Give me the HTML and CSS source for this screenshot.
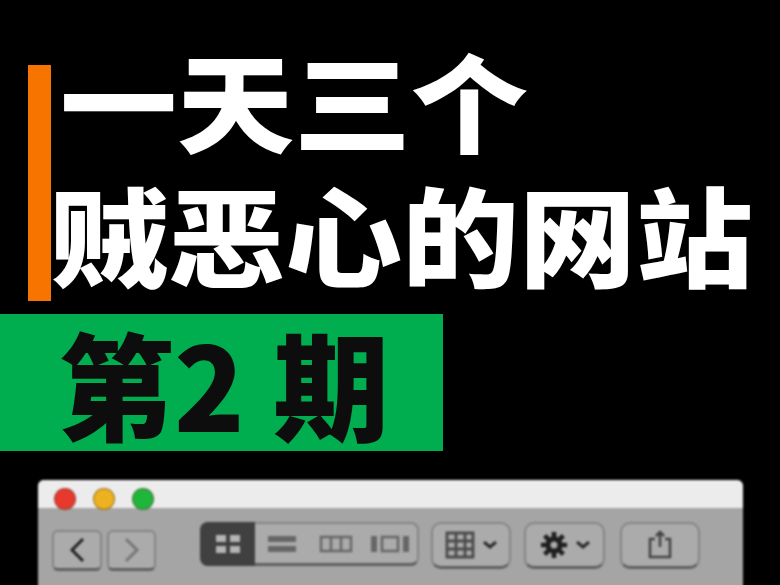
FILE: index.html
```html
<!DOCTYPE html>
<html lang="zh-CN">
<head>
<meta charset="utf-8">
<title>一天三个贼恶心的网站</title>
<link rel="stylesheet" href="styles.css">
</head>
<body>
<header class="head">
  <div class="accent"></div>
  <h1 class="title">
    <span class="line one">一天三个</span>
    <span class="line two">贼恶心的网站</span>
  </h1>
</header>
<div class="banner"><span class="banner-text">第2 期</span></div>
<section class="window">
  <div class="titlebar">
    <i class="dot red"></i><i class="dot yellow"></i><i class="dot green"></i>
  </div>
  <div class="toolbar">
    <div class="nav">
      <div class="btn nav-btn"><svg width="20" height="26" viewBox="0 0 20 26"><path d="M16 2 5 13l11 11" fill="none" stroke="#222" stroke-width="3"/></svg></div>
      <div class="btn nav-btn next"><svg width="20" height="26" viewBox="0 0 20 26"><path d="M4 2l11 11L4 24" fill="none" stroke="#777" stroke-width="3"/></svg></div>
    </div>
    <div class="segments">
      <div class="seg active"><svg width="26" height="20" viewBox="0 0 26 20"><path fill="#b5b5b5" d="M1 1h10v7H1zM15 1h10v7H15zM1 12h10v7H1zM15 12h10v7H15z"/></svg></div>
      <div class="seg"><svg width="30" height="20" viewBox="0 0 30 20"><path fill="#666" d="M1 2h28v6H1zM1 12h28v6H1z"/></svg></div>
      <div class="seg"><svg width="34" height="20" viewBox="0 0 34 20"><path fill="none" stroke="#666" stroke-width="2.4" d="M2 3h30v14H2zM12 3v14M22 3v14"/></svg></div>
      <div class="seg"><svg width="40" height="20" viewBox="0 0 40 20"><path fill="#666" d="M1 2h6v16H1zM33 2h6v16h-6z"/><path fill="none" stroke="#666" stroke-width="2.6" d="M12 3h16v14H12z"/></svg></div>
    </div>
    <div class="btn tool arrange">
      <svg width="30" height="28" viewBox="0 0 30 28"><path fill="none" stroke="#4a4a4a" stroke-width="2.8" d="M2 2h26v24H2zM2 10h26M2 18h26M11 2v24M20 2v24"/></svg>
      <svg class="chev" width="14" height="8" viewBox="0 0 14 8"><path d="M1 1l6 5 6-5" fill="none" stroke="#2b2b2b" stroke-width="3"/></svg>
    </div>
    <div class="btn tool gear">
      <svg width="28" height="28" viewBox="0 0 30 30"><circle cx="15" cy="15" r="6.5" fill="none" stroke="#1f1f1f" stroke-width="5.5"/><path stroke="#1f1f1f" stroke-width="5" d="M15 1v6M15 23v6M1 15h6M23 15h6M5 5l4 4M21 21l4 4M25 5l-4 4M9 21l-4 4"/></svg>
      <svg class="chev" width="14" height="8" viewBox="0 0 14 8"><path d="M1 1l6 5 6-5" fill="none" stroke="#2b2b2b" stroke-width="3"/></svg>
    </div>
    <div class="btn tool share">
      <svg width="26" height="30" viewBox="0 0 26 30"><path fill="none" stroke="#444" stroke-width="2.6" d="M8 9H3v18h20V9h-5M13 17V3M9 6l4-4 4 4"/></svg>
    </div>
  </div>
</section>
</body>
</html>
```
FILE: styles.css
```css
* { box-sizing: border-box; }
html, body { margin: 0; height: 585px; overflow: hidden; background: #000; }
body { font-family: "Noto Sans CJK SC", "Liberation Sans", sans-serif; }

.head { display: flex; height: 314px; padding: 65px 0 13px 28px; }
.accent { width: 23px; background: #f77400; flex: none; }
.title { margin: -32px 0 0; font-size: 117px; line-height: 128px; font-weight: 900; color: #fff; }
.line { display: block; white-space: nowrap; transform: scaleY(.92); transform-origin: 0 60%; }
.one { margin-left: 9px; margin-bottom: 6px; }
.two { margin-left: 0; }

.banner { display: flex; align-items: center; width: 443px; height: 137px; background: #00ae50; padding: 0 0 3px 58px; }
.banner-text { font-size: 116px; line-height: 134px; font-weight: 900; color: #0d0d0d; white-space: pre; word-spacing: 2px; }

.window { margin: 29px 0 0 38px; width: 705px; height: 120px; border-radius: 6px 6px 0 0; overflow: hidden; background: #a5a5a5; filter: blur(1px); }
.titlebar { display: flex; align-items: center; gap: 17px; height: 28px; padding: 10px 0 0 16px; background: #ececec; }
.dot { width: 22px; height: 22px; border-radius: 50%; flex: none; border: 1px solid rgba(90, 70, 40, .55); }
.red { background: #e8392e; }
.yellow { background: #eeb11f; }
.green { background: #1fb63c; }

.toolbar { display: flex; align-items: flex-start; padding: 14px 0 0 14px; }
.btn { display: flex; align-items: center; justify-content: center; background: #ababab; border: 2px solid #858585; border-bottom-width: 3px; border-bottom-color: #5f5f5f; border-radius: 6px; }
.nav { display: flex; gap: 5px; margin-top: 8px; margin-right: 44px; }
.nav-btn { width: 50px; height: 41px; }
.next { width: 49px; }
.segments { display: flex; width: 219px; height: 44px; margin-right: 12px; background: #ababab; border: 2px solid #858585; border-bottom: 3px solid #5f5f5f; border-radius: 8px; }
.seg { flex: 1; display: flex; align-items: center; justify-content: center; }
.active { flex: none; width: 55px; margin: -2px 0 -3px -2px; background: #404040; border-radius: 8px 0 0 8px; }
.tool { height: 47px; border-radius: 10px; }
.arrange { width: 80px; gap: 8px; margin-right: 13px; }
.gear { width: 81px; gap: 8px; margin-right: 15px; }
.share { width: 80px; }
.chev { flex: none; }
```
